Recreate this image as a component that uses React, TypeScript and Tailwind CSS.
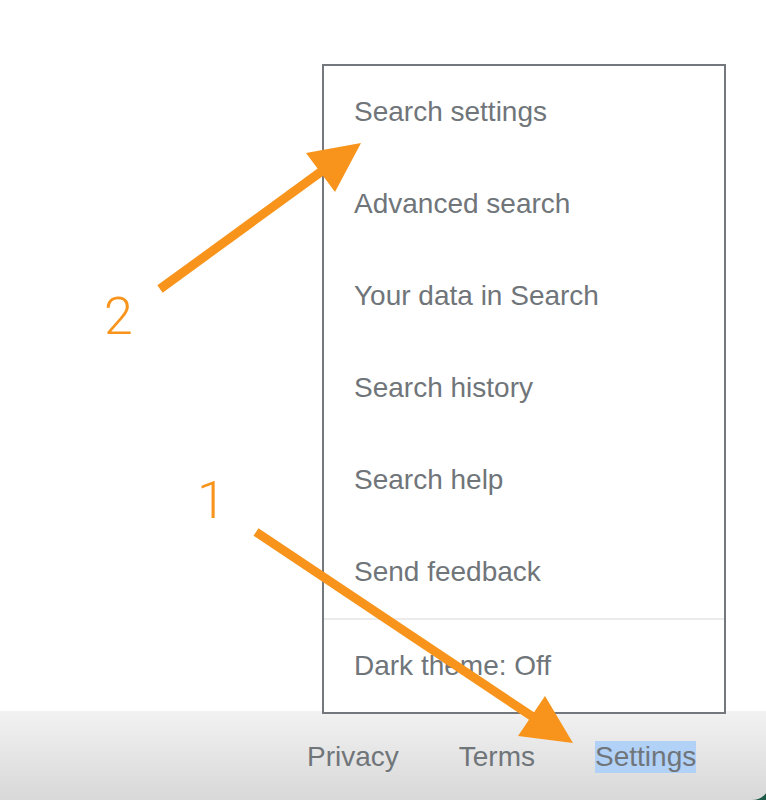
import React from "react";

const items = [
  "Search settings",
  "Advanced search",
  "Your data in Search",
  "Search history",
  "Search help",
  "Send feedback",
];

export default function App() {
  return (
    <div className="relative w-[766px] h-[800px] overflow-hidden bg-white flex flex-col" style={{ fontFamily: '"Liberation Sans", Arial, sans-serif' }}>
      <div className="h-[64px] shrink-0" />
      <div className="relative z-10 ml-[322px] w-[404px] h-[650px] mb-[-3px] shrink-0 border-2 border-[#74787c] bg-white flex flex-col">
        {items.map((t) => (
          <div key={t} className="h-[92px] shrink-0 flex items-center pb-[1px] pl-[30px] text-[28px] text-[#70757a]">
            {t}
          </div>
        ))}
        <div className="h-[2px] shrink-0 bg-[#ebebeb]" />
        <div className="h-[92px] shrink-0 flex items-center pl-[30px] text-[28px] text-[#70757a]">
          Dark theme: Off
        </div>
      </div>
      <div className="relative flex-1 bg-[#1d5a48] overflow-hidden">
        <div className="h-full w-[770px] rounded-br-[18px] bg-gradient-to-b from-[#f2f2f2] to-[#d8d8d8] flex items-start pt-[30px] pl-[307px] text-[28px] leading-[32px] text-[#70757a]">
          <span>Privacy</span>
          <span className="ml-[60px]">Terms</span>
          <span className="ml-[60px] bg-[#b2d1f6]">Settings</span>
        </div>
      </div>
      <svg className="absolute inset-0 z-20 pointer-events-none" width="766" height="800" viewBox="0 0 766 800">
        <g fill="#f8941c" stroke="none">
          <line x1="160" y1="289" x2="322" y2="171" stroke="#f8941c" strokeWidth="9" />
          <polygon points="306,153 361,143 335,192" />
          <line x1="256" y1="532" x2="533" y2="717" stroke="#f8941c" strokeWidth="9" />
          <polygon points="545,696 573,743 518,736" />
          <text x="104" y="334" fontFamily="Roboto, sans-serif" fontWeight="300" fontSize="52">2</text>
          <text x="197" y="518" fontFamily="Roboto, sans-serif" fontWeight="300" fontSize="52">1</text>
        </g>
      </svg>
    </div>
  );
}
